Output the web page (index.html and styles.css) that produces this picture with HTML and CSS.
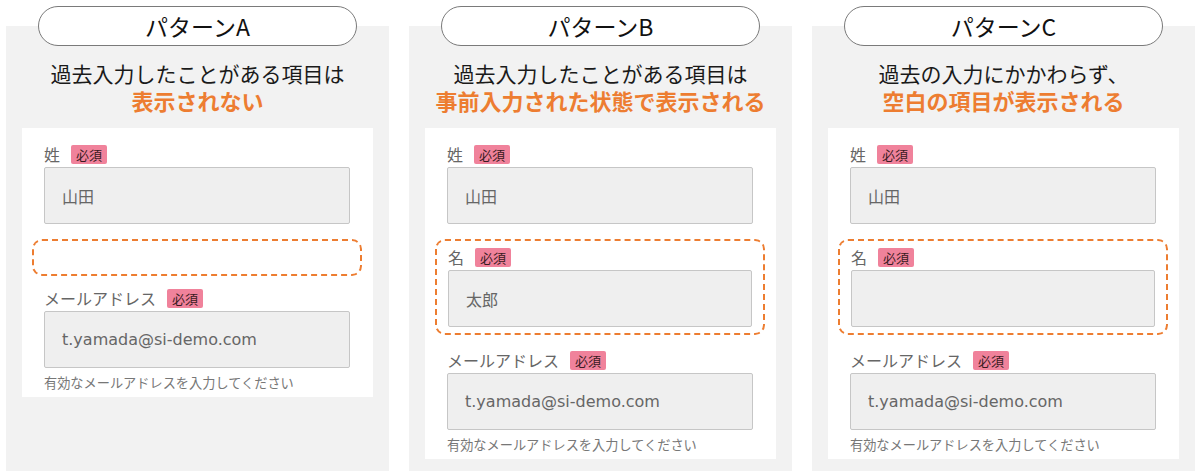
FILE: index.html
```html
<!DOCTYPE html>
<html lang="ja">
<head>
<meta charset="utf-8">
<title>パターン比較</title>
<link rel="stylesheet" href="styles.css">
</head>
<body>
<div class="page">
  <section class="column">
    <div class="pill">パターンA</div>
    <div class="panel">
      <div class="lead"><span class="lead-line">過去入力したことがある項目は</span><strong class="lead-line accent">表示されない</strong></div>
      <div class="card">
        <div class="field">
          <div class="label-row"><span class="label">姓</span><span class="badge">必須</span></div>
          <div class="input">山田</div>
        </div>
        <div class="dashed dashed-empty"></div>
        <div class="field">
          <div class="label-row"><span class="label">メールアドレス</span><span class="badge">必須</span></div>
          <div class="input input-latin">t.yamada@si-demo.com</div>
          <p class="help">有効なメールアドレスを入力してください</p>
        </div>
      </div>
    </div>
  </section>

  <section class="column">
    <div class="pill">パターンB</div>
    <div class="panel">
      <div class="lead"><span class="lead-line">過去入力したことがある項目は</span><strong class="lead-line accent">事前入力された状態で表示される</strong></div>
      <div class="card">
        <div class="field">
          <div class="label-row"><span class="label">姓</span><span class="badge">必須</span></div>
          <div class="input">山田</div>
        </div>
        <div class="dashed dashed-filled">
          <div class="field">
            <div class="label-row"><span class="label">名</span><span class="badge">必須</span></div>
            <div class="input">太郎</div>
          </div>
        </div>
        <div class="field">
          <div class="label-row"><span class="label">メールアドレス</span><span class="badge">必須</span></div>
          <div class="input input-latin">t.yamada@si-demo.com</div>
          <p class="help">有効なメールアドレスを入力してください</p>
        </div>
      </div>
    </div>
  </section>

  <section class="column">
    <div class="pill">パターンC</div>
    <div class="panel">
      <div class="lead"><span class="lead-line">過去の入力にかかわらず、</span><strong class="lead-line accent">空白の項目が表示される</strong></div>
      <div class="card">
        <div class="field">
          <div class="label-row"><span class="label">姓</span><span class="badge">必須</span></div>
          <div class="input">山田</div>
        </div>
        <div class="dashed dashed-filled">
          <div class="field">
            <div class="label-row"><span class="label">名</span><span class="badge">必須</span></div>
            <div class="input"></div>
          </div>
        </div>
        <div class="field">
          <div class="label-row"><span class="label">メールアドレス</span><span class="badge">必須</span></div>
          <div class="input input-latin">t.yamada@si-demo.com</div>
          <p class="help">有効なメールアドレスを入力してください</p>
        </div>
      </div>
    </div>
  </section>
</div>
</body>
</html>
```

FILE: styles.css
```css
html, body {
  margin: 0;
  padding: 0;
  background: #ffffff;
}

body {
  font-family: "Noto Sans CJK JP", "Noto Sans", sans-serif;
  color: #222;
}

.page {
  display: flex;
  gap: 20px;
  padding: 6px 0 0 6px;
  height: 475px;
  box-sizing: border-box;
}

.column {
  width: 383px;
  height: 465px;
  display: flex;
  flex-direction: column;
  align-items: center;
}

.pill {
  position: relative;
  z-index: 1;
  width: 319px;
  height: 40px;
  box-sizing: border-box;
  border: 1.5px solid #7a7a7a;
  border-radius: 20px;
  background: #ffffff;
  display: flex;
  align-items: center;
  justify-content: center;
  font-size: 23px;
  color: #111;
  line-height: 1;
}

.panel {
  align-self: stretch;
  flex: 1;
  margin-top: -20px;
  padding: 34px 16px 0 16px;
  background: #f2f2f2;
  display: flex;
  flex-direction: column;
}

.lead {
  display: flex;
  flex-direction: column;
  align-items: center;
}

.lead-line {
  display: block;
  height: 27px;
  font-size: 21px;
  line-height: 27px;
  color: #1a1a1a;
  white-space: nowrap;
}

.accent {
  font-size: 22px;
  font-weight: 700;
  color: #ed7d31;
}

.card {
  margin-top: 14px;
  background: #ffffff;
  padding: 16px 23px 6px 22px;
  display: flex;
  flex-direction: column;
}

.field {
  display: flex;
  flex-direction: column;
}

.label-row {
  display: flex;
  align-items: center;
  height: 20px;
  margin-bottom: 3px;
}

.label {
  font-size: 16px;
  color: #666;
  line-height: 20px;
}

.badge {
  margin-left: 11px;
  height: 19px;
  padding: 0 5px;
  border-radius: 2px;
  background: #f0829b;
  color: #3a1a22;
  font-size: 13px;
  line-height: 19px;
}

.input {
  height: 57px;
  box-sizing: border-box;
  border: 1px solid #c6c6c6;
  border-radius: 2px;
  background: #efefef;
  padding-left: 17px;
  display: flex;
  align-items: center;
  font-size: 16px;
  color: #666;
}

.input-latin {
  font-family: "DejaVu Sans", "Noto Sans CJK JP", sans-serif;
  font-size: 16px;
}

.help {
  margin: 7px 0 0;
  font-size: 13.2px;
  line-height: 16px;
  color: #777;
}

.dashed {
  margin: 15px -12px 15px -12px;
  border: 2px dashed #ed7d31;
  border-radius: 10px;
}

.dashed-empty {
  height: 33px;
  margin-bottom: 12px;
}

.dashed-filled {
  padding: 6px 11px 6px 11px;
}
```
